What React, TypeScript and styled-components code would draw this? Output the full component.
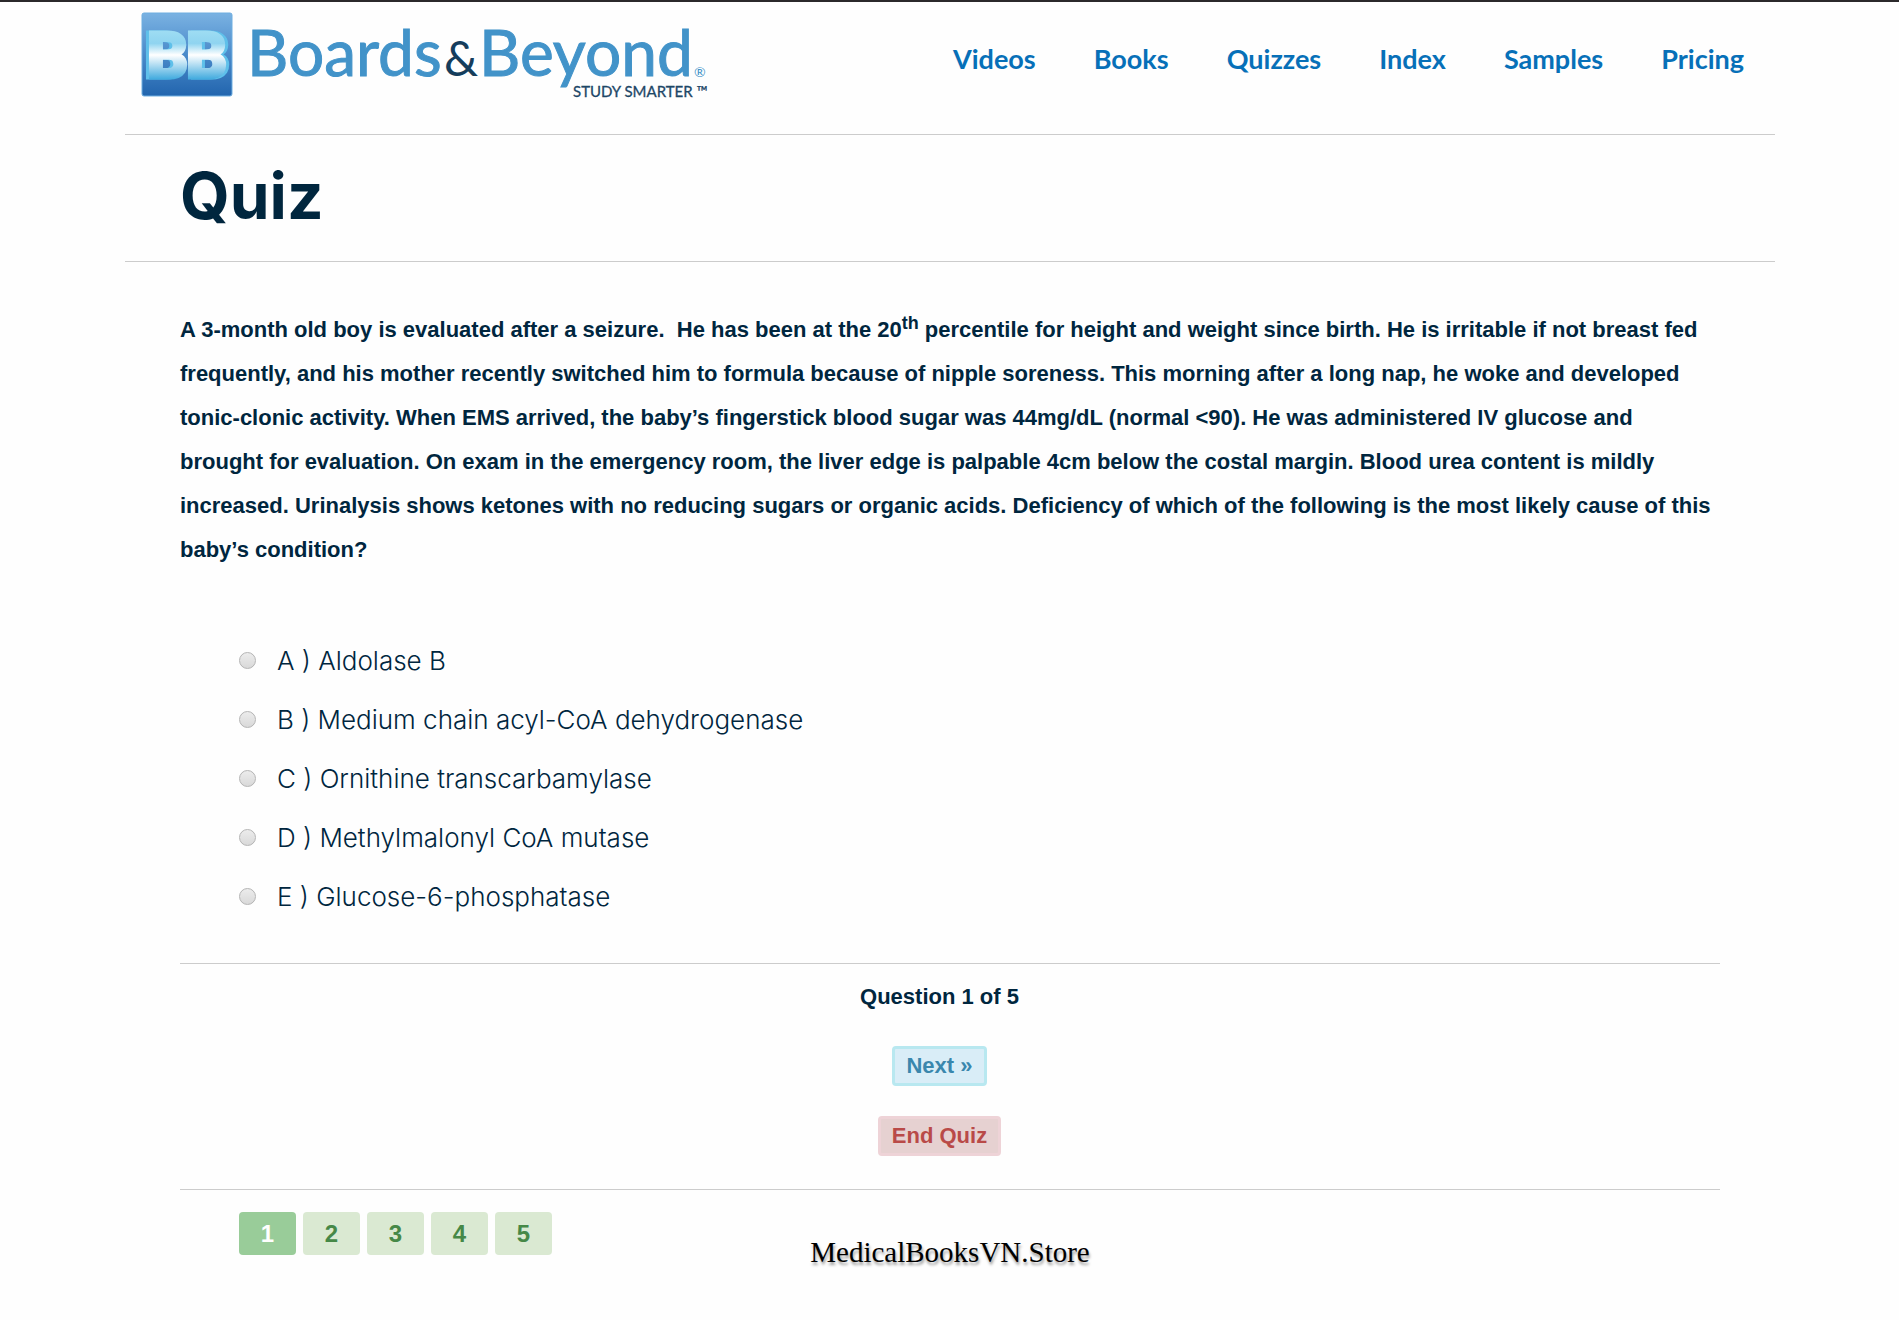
import React, { useState } from "react";
import styled, { createGlobalStyle } from "styled-components";

const ink = "#00263e";
const rule = "#cccccc";
const sans = `Inter, "Liberation Sans", sans-serif`;
const bold = `"Liberation Sans", Arial, sans-serif`;

const GlobalStyle = createGlobalStyle`
  *, *::before, *::after { box-sizing: border-box; }
  body { margin: 0; background: #fefefe; color: ${ink}; font-family: ${sans}; }
`;

const Page = styled.div`
  border-top: 2px solid #2b292b;
  padding: 0 124px 48px 125px;
`;

const Header = styled.header`
  display: flex;
  justify-content: space-between;
  align-items: flex-start;
  height: 133px;
  padding: 8px 31px 0 15px;
  border-bottom: 1px solid ${rule};
`;

const LogoLink = styled.a`
  display: block;
  line-height: 0;
`;

const Nav = styled.nav`
  display: flex;
  gap: 58px;
  padding-top: 33px;
`;

const NavLink = styled.a`
  color: #0770b8;
  font: 700 27px/32px Lato, sans-serif;
  text-decoration: none;
`;

const TitleBar = styled.div`
  padding: 25px 55px 29px;
  border-bottom: 1px solid ${rule};
`;

const Title = styled.h1`
  margin: 0;
  font: 700 64px/72px ${sans};
`;

const Content = styled.main`
  padding: 46px 55px 0;
`;

const Stem = styled.p`
  margin: 0 0 59px;
  font: 700 22px/44px ${bold};

  sup {
    font-size: 18px;
    line-height: 0;
  }
`;

const Options = styled.div`
  display: flex;
  flex-direction: column;
  padding-left: 59px;
`;

const Option = styled.label`
  display: flex;
  align-items: center;
  gap: 21px;
  height: 59px;
  font-size: 26px;
  font-weight: 300;
`;

const Radio = styled.input`
  appearance: none;
  flex: none;
  width: 17px;
  height: 17px;
  margin: 0;
  border: 1px solid #b4b4b4;
  border-radius: 50%;
  background: linear-gradient(#ececec, #d9d9d9);

  &:checked {
    background: radial-gradient(#555 0 4px, #e2e2e2 5px);
  }
`;

const Controls = styled.section`
  display: flex;
  flex-direction: column;
  align-items: center;
  margin-top: 37px;
  padding: 18px 21px 33px 0;
  border-top: 1px solid ${rule};
  border-bottom: 1px solid ${rule};
`;

const Progress = styled.p`
  margin: 0 0 34px;
  font: 700 22px/30px ${bold};
`;

const Action = styled.button<{ $danger?: boolean }>`
  height: 40px;
  padding: 0 11px;
  border: 3px solid ${(p) => (p.$danger ? "#eed3d7" : "#b8e8f0")};
  border-radius: 4px;
  background: ${(p) => (p.$danger ? "#e6d1d1" : "#d9edf7")};
  color: ${(p) => (p.$danger ? "#b94a48" : "#3a87ad")};
  font: 700 22px/34px ${bold};

  & + & {
    margin-top: 30px;
  }
`;

const Footer = styled.footer`
  display: grid;
  grid-template-columns: 1fr auto 1fr;
  align-items: start;
  padding-top: 22px;
`;

const Pager = styled.div`
  display: flex;
  gap: 7px;
  padding-left: 59px;
`;

const PageButton = styled.button<{ $active: boolean }>`
  width: 57px;
  height: 43px;
  padding: 0;
  border: 0;
  border-radius: 4px;
  background: ${(p) => (p.$active ? "#99cc99" : "#dae9d2")};
  color: ${(p) => (p.$active ? "#ffffff" : "#468847")};
  font: 700 24px/43px ${bold};
`;

const Store = styled.span`
  padding-top: 24px;
  color: #000;
  font: 29px/32px "Liberation Serif", serif;
  text-shadow: 1px 3px 3px rgba(0, 0, 0, 0.4);
`;

function Logo() {
  return (
    <svg width="572" height="92" viewBox="0 0 572 92" role="img" aria-label="Boards & Beyond">
      <defs>
        <linearGradient id="tile" x1="0" y1="0" x2="0" y2="1">
          <stop offset="0" stopColor="#7ab2e2" />
          <stop offset="0.5" stopColor="#4a8aca" />
          <stop offset="1" stopColor="#2265ae" />
        </linearGradient>
        <linearGradient id="face" gradientUnits="userSpaceOnUse" x1="0" y1="16" x2="0" y2="74">
          <stop offset="0" stopColor="#a4e0f4" />
          <stop offset="0.3" stopColor="#8fd4f0" />
          <stop offset="0.5" stopColor="#ffffff" />
          <stop offset="1" stopColor="#1c9ad8" />
        </linearGradient>
      </defs>
      <rect x="2" y="3" width="90" height="83" rx="2" fill="url(#tile)" stroke="#6eaee0" strokeWidth="1" />
      <g fontFamily="Roboto, sans-serif" fontWeight="900" fontSize="64">
        <g fill="#3ea8e0" stroke="#5fc0ea" strokeWidth="3">
          <text x="4" y="68">B</text>
          <text x="49" y="68">B</text>
        </g>
        <g fill="url(#face)" stroke="url(#face)" strokeWidth="3">
          <text x="7" y="68">B</text>
          <text x="46" y="68">B</text>
        </g>
      </g>
      <g fontFamily="Lato, sans-serif" fontSize="64" fill="#4293c9" stroke="#4293c9">
        <text x="107" y="66">Boards</text>
        <text x="339" y="66">Beyond</text>
      </g>
      <text x="304" y="66" fontFamily="Lato, sans-serif" fontSize="48" fill="#153d5c">&amp;</text>
      <text x="554" y="67" fontFamily="Lato, sans-serif" fontSize="14" fill="#4293c9">®</text>
      <text x="433" y="87" fontFamily="Lato, sans-serif" fontSize="15" fill="#1d4767" stroke="#1d4767" strokeWidth="0.3">
        STUDY SMARTER ™
      </text>
    </svg>
  );
}

const links = ["Videos", "Books", "Quizzes", "Index", "Samples", "Pricing"];

const options = [
  ["A", "Aldolase B"],
  ["B", "Medium chain acyl-CoA dehydrogenase"],
  ["C", "Ornithine transcarbamylase"],
  ["D", "Methylmalonyl CoA mutase"],
  ["E", "Glucose-6-phosphatase"],
];

export default function App() {
  const [answer, setAnswer] = useState("");

  return (
    <>
      <GlobalStyle />
      <Page>
        <Header>
          <LogoLink href="#home">
            <Logo />
          </LogoLink>
          <Nav>
            {links.map((name) => (
              <NavLink key={name} href={`#${name.toLowerCase()}`}>
                {name}
              </NavLink>
            ))}
          </Nav>
        </Header>
        <TitleBar>
          <Title>Quiz</Title>
        </TitleBar>
        <Content>
          <Stem>
            A 3-month old boy is evaluated after a seizure.&nbsp; He has been at the 20<sup>th</sup> percentile for
            height and weight since birth. He is irritable if not breast fed
            <br />
            frequently, and his mother recently switched him to formula because of nipple soreness. This morning after
            a long nap, he woke and developed
            <br />
            tonic-clonic activity. When EMS arrived, the baby’s fingerstick blood sugar was 44mg/dL (normal &lt;90). He
            was administered IV glucose and
            <br />
            brought for evaluation. On exam in the emergency room, the liver edge is palpable 4cm below the costal
            margin. Blood urea content is mildly
            <br />
            increased. Urinalysis shows ketones with no reducing sugars or organic acids. Deficiency of which of the
            following is the most likely cause of this
            <br />
            baby’s condition?
          </Stem>
          <Options role="radiogroup" aria-label="Answers">
            {options.map(([letter, text]) => (
              <Option key={letter}>
                <Radio
                  type="radio"
                  name="answer"
                  value={letter}
                  checked={answer === letter}
                  onChange={() => setAnswer(letter)}
                />
                <span>
                  {letter} ) {text}
                </span>
              </Option>
            ))}
          </Options>
          <Controls>
            <Progress>Question 1 of 5</Progress>
            <Action type="button">Next »</Action>
            <Action type="button" $danger>
              End Quiz
            </Action>
          </Controls>
          <Footer>
            <Pager>
              {[1, 2, 3, 4, 5].map((n) => (
                <PageButton key={n} type="button" $active={n === 1}>
                  {n}
                </PageButton>
              ))}
            </Pager>
            <Store>MedicalBooksVN.Store</Store>
          </Footer>
        </Content>
      </Page>
    </>
  );
}
